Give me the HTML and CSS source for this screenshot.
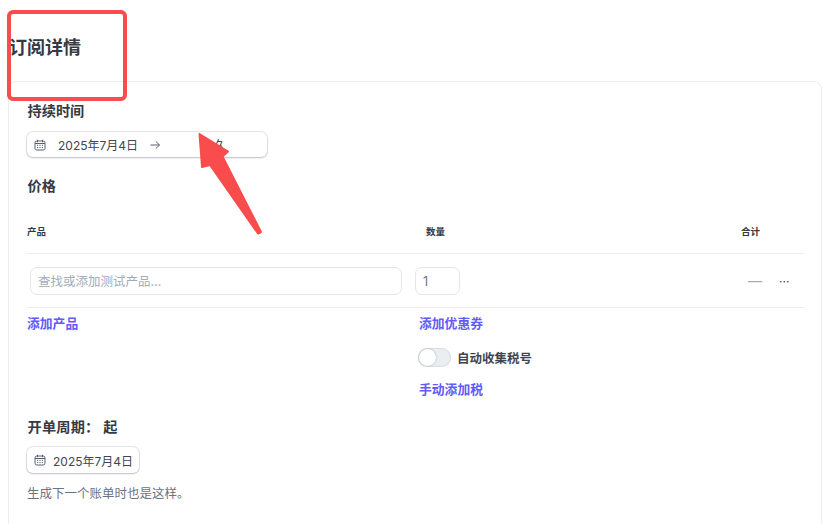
FILE: index.html
```html
<!DOCTYPE html>
<html lang="zh-CN">
<head>
    <meta charset="UTF-8">
    <title>订阅详情</title>
    <link rel="stylesheet" href="styles.css">
</head>
<body>
    <h1 class="page-title">订阅详情</h1>

    <div class="card">
        <div class="section-title">持续时间</div>
        <div class="date-btn date-range">
            <svg class="cal-icon" viewBox="0 0 12 12"><rect x="1" y="2" width="10" height="9" rx="1.8"/><path d="M3.5 .8v2.4M8.5 .8v2.4M1 4.5h10M3 6.3h1.2M5.4 6.3h1.2M7.8 6.3h1.2M3 8.6h1.2M5.4 8.6h1.2M7.8 8.6h1.2"/></svg>
            <span>2025年7月4日</span>
            <svg class="arrow-icon" viewBox="0 0 12 12"><path d="M1.5 6h9M6.8 2.4 10.5 6l-3.7 3.6"/></svg>
            <span class="date-end">永久</span>
        </div>

        <div class="section-title price-title">价格</div>

        <div class="price-head">
            <div class="col-product">产品</div>
            <div class="col-qty">数量</div>
            <div class="col-total">合计</div>
        </div>
        <div class="price-row">
            <div class="fake-input product-input">查找或添加测试产品...</div>
            <div class="fake-input qty-input">1</div>
            <div class="row-total">—</div>
            <div class="row-more">···</div>
        </div>

        <div class="price-actions">
            <a class="link add-product">添加产品</a>
            <div class="tax-col">
                <a class="link">添加优惠券</a>
                <div class="toggle-row">
                    <span class="toggle"><span class="knob"></span></span>
                    <span class="toggle-label">自动收集税号</span>
                </div>
                <a class="link">手动添加税</a>
            </div>
        </div>

        <div class="section-title billing-title">开单周期： 起</div>
        <div class="date-btn date-single">
            <svg class="cal-icon" viewBox="0 0 12 12"><rect x="1" y="2" width="10" height="9" rx="1.8"/><path d="M3.5 .8v2.4M8.5 .8v2.4M1 4.5h10M3 6.3h1.2M5.4 6.3h1.2M7.8 6.3h1.2M3 8.6h1.2M5.4 8.6h1.2M7.8 8.6h1.2"/></svg>
            <span>2025年7月4日</span>
        </div>
        <p class="hint">生成下一个账单时也是这样。</p>
        <div class="section-title cut-title">免费试用天数</div>
    </div>

    <!-- annotation drawn over the screenshot -->
    <div class="mark-box"></div>
    <svg class="mark-arrow" viewBox="0 0 823 524"><polygon points="199.5,134 228,151.5 222.5,156.5 261,232 258,233.5 210,165 202,167" /></svg>
</body>
</html>
```

FILE: styles.css
```css
* {
    margin: 0;
    padding: 0;
    box-sizing: border-box;
}

html, body {
    height: 524px;
    overflow: hidden;
}

body {
    font-family: "Inter", "Noto Sans CJK SC", sans-serif;
    background-color: #fff;
    color: #30313d;
    padding: 0 0 0 8px;
    position: relative;
}

.page-title {
    font-size: 18px;
    font-weight: 600;
    line-height: 26px;
    padding: 35px 0 0 1px;
    height: 81px;
    color: #353a44;
}

.card {
    width: 814px;
    height: 480px;
    border: 1px solid #ebeef1;
    border-radius: 8px;
    padding: 19px 18px 0 18px;
}

.section-title {
    font-size: 14.2px;
    font-weight: 600;
    line-height: 20px;
    padding-left: 0.5px;
    color: #353a44;
}

.date-btn {
    display: flex;
    align-items: center;
    border-radius: 6px;
    background: #fff;
    font-size: 12px;
    color: #414552;
    box-shadow: 0 0 0 1px rgba(64, 68, 82, 0.12), 0 1px 2px rgba(64, 68, 82, 0.24);
}

.date-range {
    width: 240px;
    height: 25px;
    margin-top: 11px;
    padding-left: 7px;
}

.date-single {
    width: 112px;
    height: 26px;
    margin-top: 10px;
    padding-left: 7px;
}

.cal-icon {
    width: 12px;
    height: 12px;
    flex: none;
    fill: none;
    stroke: #596171;
    stroke-width: 1;
}

.date-range .cal-icon {
    margin-right: 12px;
}

.date-single .cal-icon {
    margin-right: 7px;
}

.arrow-icon {
    width: 12px;
    height: 12px;
    margin-left: 11px;
    fill: none;
    stroke: #596171;
    stroke-width: 1;
}

.date-end {
    margin-left: 41px;
}

.price-title {
    margin-top: 19px;
}

.price-head {
    display: flex;
    height: 58px;
    padding-top: 29px;
    border-bottom: 1px solid #ebeef1;
    font-size: 9.5px;
    font-weight: 600;
    line-height: 14px;
    color: #353a44;
    width: 777px;
}

.col-product {
    width: 399px;
}

.col-qty {
    width: 315px;
}

.price-row {
    display: flex;
    align-items: center;
    width: 777px;
    height: 54px;
    border-bottom: 1px solid #ebeef1;
    padding-left: 3px;
}

.fake-input {
    height: 28px;
    border: 1px solid #e3e6ea;
    border-radius: 7px;
    font-size: 12.5px;
    line-height: 27px;
    padding-left: 7px;
}

.product-input {
    width: 372px;
    color: #a3acb9;
}

.qty-input {
    width: 45px;
    margin-left: 13px;
    color: #6a7383;
}

.row-total {
    margin-left: 288px;
    color: #a3acb9;
    font-size: 14px;
}

.row-more {
    margin-left: 17px;
    padding-top: 1px;
    font-size: 12px;
    color: #414552;
}

.price-actions {
    display: flex;
    padding-top: 6px;
}

.add-product {
    width: 392px;
    flex: none;
}

.link {
    display: block;
    font-size: 12.8px;
    font-weight: 600;
    line-height: 20px;
    color: #625afa;
}

.tax-col {
    display: flex;
    flex-direction: column;
}

.toggle-row {
    display: flex;
    align-items: center;
    height: 20px;
    margin: 13px 0;
}

.toggle {
    position: relative;
    width: 33px;
    height: 19px;
    border-radius: 10px;
    background: #ebeef1;
    box-shadow: inset 0 0 0 1px #d8dde3;
    margin-left: -1px;
}

.knob {
    position: absolute;
    top: 1px;
    left: 1px;
    width: 17px;
    height: 17px;
    border-radius: 50%;
    background: #fff;
    box-shadow: 0 0 2px rgba(64, 68, 82, 0.4);
}

.toggle-label {
    margin-left: 6px;
    font-size: 12.5px;
    font-weight: 600;
    color: #414552;
}

.billing-title {
    margin-top: 17px;
    letter-spacing: 0.2px;
}

.hint {
    margin-top: 12px;
    font-size: 12.5px;
    line-height: 18px;
    color: #6a7383;
}

.cut-title {
    margin-top: 18px;
}

.mark-box {
    position: absolute;
    top: 10px;
    left: 7px;
    width: 120px;
    height: 91px;
    border: 4px solid #f94c4c;
    border-radius: 6px;
}

.mark-arrow {
    position: absolute;
    top: 0;
    left: 0;
    width: 823px;
    height: 524px;
    fill: #f94c4c;
    stroke: #f94c4c;
    stroke-width: 2;
    stroke-linejoin: round;
}
```
